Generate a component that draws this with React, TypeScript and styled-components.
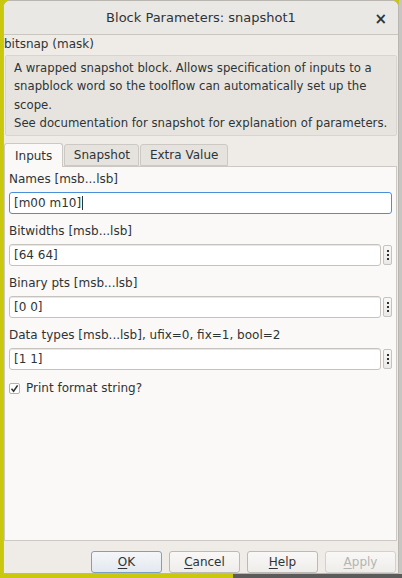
import React, { useState } from 'react';
import styled, { createGlobalStyle } from 'styled-components';

const GlobalStyle = createGlobalStyle`
  html, body {
    margin: 0;
    padding: 0;
  }
  body {
    font-family: "DejaVu Sans", "Noto Sans", sans-serif;
    font-size: 12px;
    color: #2e3436;
  }
`;

// desktop behind the dialog: yellow canvas, a grey strip on the right
const Desktop = styled.div`
  width: 402px;
  height: 578px;
  box-sizing: border-box;
  padding: 0 3px 4px 3px;
  background:
    linear-gradient(to bottom, transparent 574px, #5b5b5b 574px) 233px 0 / 170px 100% no-repeat,
    linear-gradient(to right, transparent 399px, #c8c6c3 399px),
    #c9c80c;
  display: flex;
`;

const Dialog = styled.div`
  flex: 1;
  display: flex;
  flex-direction: column;
  background: #efece8;
  border: 1px solid #b9b6b1;
  border-top-left-radius: 7px;
  border-top-right-radius: 7px;
  overflow: hidden;
`;

const TitleBar = styled.div`
  height: 33px;
  flex: none;
  display: flex;
  align-items: center;
  justify-content: center;
  position: relative;
  background: #eae8e5;
  border-bottom: 1px solid #c9c6c1;
  font-size: 13px;
  font-weight: 500;
  color: #2e3436;
`;

const CloseButton = styled.span`
  position: absolute;
  right: 11px;
  top: 9px;
  font-size: 15px;
  font-weight: bold;
  color: #2e3436;
`;

const Body = styled.div`
  flex: 1;
  display: flex;
  flex-direction: column;
  padding: 2px 0 0 0;
`;

const MaskName = styled.div`
  padding: 0 0 3px 0;
  line-height: 15px;
`;

const Description = styled.div`
  margin: 0 1px 0 1px;
  padding: 3px 2px 3px 8px;
  background: #e7e4e0;
  border: 1px solid #d8d5d1;
  border-radius: 2px;
  line-height: 18.3px;
  font-size: 11.7px;
  white-space: nowrap;
`;

const TabBar = styled.div`
  display: flex;
  margin-top: 6px;
  height: 24px;
  align-items: flex-end;
`;

const Tab = styled.div<{ $active?: boolean }>`
  height: ${p => (p.$active ? '24px' : '22px')};
  box-sizing: border-box;
  padding: 0 ${p => (p.$active ? '10px' : '8.5px')};
  display: flex;
  align-items: center;
  background: ${p => (p.$active ? '#fbf9f7' : '#e6e3df')};
  border: 1px solid #ccc9c4;
  border-bottom: ${p => (p.$active ? 'none' : '1px solid #ccc9c4')};
  border-radius: 3px 3px 0 0;
  margin-right: 1px;
  position: relative;
  z-index: ${p => (p.$active ? 2 : 1)};
  margin-bottom: ${p => (p.$active ? '-1px' : '0')};
`;

const Panel = styled.div`
  flex: 1;
  background: #fbf9f7;
  border: 1px solid #ccc9c4;
  margin-right: 1px;
  padding: 5px 4px 0 4px;
  display: flex;
  flex-direction: column;
`;

const FieldLabel = styled.div`
  line-height: 15px;
  padding: 0 0 5px 0;
`;

const FieldRow = styled.div`
  display: flex;
  align-items: center;
  gap: 2px;
  margin-bottom: 10px;
`;

const TextInput = styled.div<{ $focused?: boolean }>`
  flex: 1;
  height: 22px;
  box-sizing: border-box;
  display: flex;
  align-items: center;
  padding-left: 4px;
  background: #ffffff;
  border: 1px solid ${p => (p.$focused ? '#4a90d9' : '#c6c3be')};
  border-radius: 3px;
  box-shadow: ${p => (p.$focused ? 'none' : 'inset 0 1px 0 #e9e7e4')};
`;

const Caret = styled.span`
  display: inline-block;
  width: 1px;
  height: 14px;
  background: #2e3436;
  margin-left: 1px;
`;

const MoreButton = styled.div`
  width: 9px;
  height: 20px;
  box-sizing: border-box;
  border: 1px solid #c6c3be;
  border-radius: 2px;
  background: linear-gradient(#f8f7f5, #ebe9e6);
  display: flex;
  flex-direction: column;
  align-items: center;
  justify-content: center;
  gap: 2px;
`;

const Dot = styled.span`
  width: 2px;
  height: 2px;
  background: #2e3436;
`;

const CheckRow = styled.label`
  display: flex;
  align-items: center;
  gap: 6px;
  margin-top: 1px;
`;

const CheckBox = styled.span`
  width: 11px;
  height: 11px;
  box-sizing: border-box;
  border: 1px solid #b6b3ae;
  background: #fff;
  border-radius: 2px;
  display: flex;
  align-items: center;
  justify-content: center;
`;

const ButtonBar = styled.div`
  flex: none;
  margin-top: 10px;
  display: flex;
  justify-content: flex-end;
  gap: 7px;
  padding: 0 2px 0 0;
  height: 22px;
`;

const DialogButton = styled.button<{ $default?: boolean; $disabled?: boolean }>`
  width: 71px;
  height: 22px;
  box-sizing: border-box;
  font: inherit;
  color: ${p => (p.$disabled ? '#b6b4b0' : '#2e3436')};
  background: ${p => (p.$default ? 'linear-gradient(#f4f6f9, #e3e9f0)' : 'linear-gradient(#f9f8f7, #efedea)')};
  border: 1px solid ${p => (p.$default ? '#7d9fc4' : p.$disabled ? '#d4d1cc' : '#bdbab5')};
  border-radius: 3px;
  padding: 0;
`;

const Mnemonic = styled.span`
  text-decoration: underline;
  text-underline-offset: 2px;
`;

type Field = { label: string; value: string; more: boolean };

const fields: Field[] = [
  { label: 'Names [msb...lsb]', value: '[m00 m10]', more: false },
  { label: 'Bitwidths [msb...lsb]', value: '[64 64]', more: true },
  { label: 'Binary pts [msb...lsb]', value: '[0 0]', more: true },
  { label: 'Data types [msb...lsb], ufix=0, fix=1, bool=2', value: '[1 1]', more: true },
];

// mask help text, already wrapped the way the dialog lays it out
const helpLines = [
  'A wrapped snapshot block. Allows specification of inputs to a',
  'snapblock word so the toolflow can automatically set up the',
  'scope.',
  'See documentation for snapshot for explanation of parameters.',
];

export default function App() {
  const [tab] = useState('Inputs');

  return (
    <>
      <GlobalStyle />
      <Desktop>
        <Dialog>
          <TitleBar>
            Block Parameters: snapshot1
            <CloseButton>×</CloseButton>
          </TitleBar>
          <Body>
            <MaskName>bitsnap (mask)</MaskName>
            <Description>
              {helpLines.map(l => (
                <div key={l}>{l}</div>
              ))}
            </Description>
            <TabBar>
              {['Inputs', 'Snapshot', 'Extra Value'].map(t => (
                <Tab key={t} $active={t === tab}>{t}</Tab>
              ))}
            </TabBar>
            <Panel>
              {fields.map((f, i) => (
                <div key={f.label}>
                  <FieldLabel>{f.label}</FieldLabel>
                  <FieldRow>
                    <TextInput $focused={i === 0}>
                      {f.value}
                      {i === 0 && <Caret />}
                    </TextInput>
                    {f.more && (
                      <MoreButton>
                        <Dot />
                        <Dot />
                        <Dot />
                      </MoreButton>
                    )}
                  </FieldRow>
                </div>
              ))}
              <CheckRow>
                <CheckBox>
                  <svg width="9" height="9" viewBox="0 0 9 9">
                    <path d="M1.5 4.8 L3.6 7.2 L7.6 1.4" fill="none" stroke="#2e3436" strokeWidth="1.6" />
                  </svg>
                </CheckBox>
                Print format string?
              </CheckRow>
            </Panel>
            <ButtonBar>
              <DialogButton $default><Mnemonic>O</Mnemonic>K</DialogButton>
              <DialogButton><Mnemonic>C</Mnemonic>ancel</DialogButton>
              <DialogButton><Mnemonic>H</Mnemonic>elp</DialogButton>
              <DialogButton $disabled><Mnemonic>A</Mnemonic>pply</DialogButton>
            </ButtonBar>
          </Body>
        </Dialog>
      </Desktop>
    </>
  );
}
